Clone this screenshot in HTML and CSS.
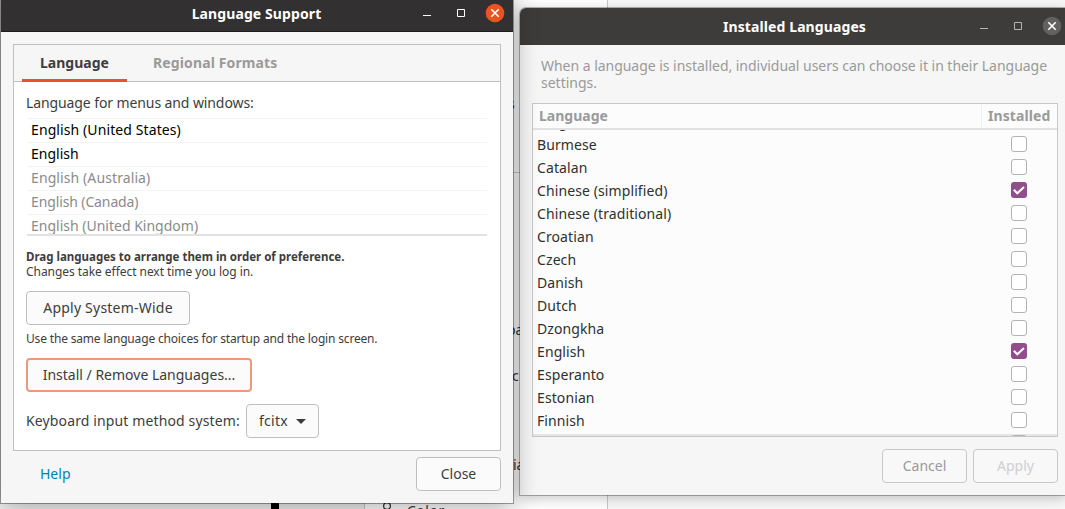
FILE: index.html
```html
<!DOCTYPE html>
<html lang="en">
<head>
<meta charset="utf-8">
<title>Language Support</title>
<link rel="stylesheet" href="styles.css">
</head>
<body>
<main class="desktop">
  <div class="backdrop">
    <div class="back-left"></div>
    <div class="back-black"></div>
    <div class="back-gray"></div>
    <div class="back-panel"></div>
    <div class="back-right"></div>
  </div>
  <div class="back-rule"></div>
  <span class="peek peek-s">s</span>
  <span class="peek peek-pa">pa</span>
  <span class="peek peek-c">c</span>
  <span class="peek peek-ia">ia</span>
  <svg class="peek-icon" viewBox="0 0 10 10"><circle cx="5" cy="4" r="3.4"/><path d="M3 7v3M7 7v3"/></svg>
  <span class="peek peek-color">Color</span>

  <section class="window installed">
    <header class="titlebar">
      <h1 class="t-installed">Installed Languages</h1>
      <div class="controls">
        <svg viewBox="0 0 80 20"><path class="line" d="M6 12.500h8M40.500 6.500h7v7h-7z"/><circle class="disc" cx="78" cy="10" r="9.300"/><path class="cross" d="M74.300 6.300l7.400 7.400M81.700 6.300l-7.400 7.400"/></svg>
      </div>
    </header>
    <div class="installed-body">
      <p class="intro"><span class="intro-first">When a language is installed, individual users can choose it in their Language</span><br><span>settings.</span></p>
      <div class="table">
        <div class="thead"><span class="th-lang">Language</span><span class="th-inst">Installed</span></div>
        <div class="rows">
          <div class="row cut"><span>Bulgarian</span></div>
          <div class="row"><span>Burmese</span><i class="check"></i></div>
          <div class="row"><span>Catalan</span><i class="check"></i></div>
          <div class="row"><span>Chinese (simplified)</span><i class="check on"><svg viewBox="0 0 16 16"><path d="M2.800 7.800l3.500 3.500L13 5"/></svg></i></div>
          <div class="row"><span>Chinese (traditional)</span><i class="check"></i></div>
          <div class="row"><span>Croatian</span><i class="check"></i></div>
          <div class="row"><span>Czech</span><i class="check"></i></div>
          <div class="row"><span>Danish</span><i class="check"></i></div>
          <div class="row"><span>Dutch</span><i class="check"></i></div>
          <div class="row"><span>Dzongkha</span><i class="check"></i></div>
          <div class="row"><span>English</span><i class="check on"><svg viewBox="0 0 16 16"><path d="M2.800 7.800l3.500 3.500L13 5"/></svg></i></div>
          <div class="row"><span>Esperanto</span><i class="check"></i></div>
          <div class="row"><span>Estonian</span><i class="check"></i></div>
          <div class="row"><span>Finnish</span><i class="check"></i></div>
          <div class="row"><span></span><i class="check"></i></div>
        </div>
      </div>
      <div class="actions">
        <button class="btn cancel">Cancel</button>
        <button class="btn apply">Apply</button>
      </div>
    </div>
  </section>

  <section class="window support">
    <header class="titlebar">
      <h1 class="t-support">Language Support</h1>
      <div class="controls">
        <svg viewBox="0 0 80 20"><path class="line" d="M6 12.500h8M40.500 6.500h7v7h-7z"/><circle class="disc" cx="78" cy="10" r="9.300"/><path class="cross" d="M74.300 6.300l7.400 7.400M81.700 6.300l-7.400 7.400"/></svg>
      </div>
    </header>
    <div class="support-body">
      <div class="panel">
        <nav class="tabs"><span class="tab active">Language</span><span class="tab regional">Regional Formats</span></nav>
        <div class="content">
          <p class="menus"><span>Language for menus and windows:</span></p>
          <ul class="langs">
            <li class="own us">English (United States)</li>
            <li class="own">English</li>
            <li class="au">English (Australia)</li>
            <li class="ca">English (Canada)</li>
            <li>English (United Kingdom)</li>
          </ul>
          <p class="small drag">Drag languages to arrange them in order of preference.</p>
          <p class="small changes">Changes take effect next time you log in.</p>
          <button class="btn wide">Apply System-Wide</button>
          <p class="small same">Use the same language choices for startup and the login screen.</p>
          <button class="btn focus">Install / Remove Languages...</button>
          <div class="method"><span>Keyboard input method system:</span>
            <button class="btn combo">fcitx<svg viewBox="0 0 10 5"><path d="M0 0h10L5 5z"/></svg></button>
          </div>
        </div>
      </div>
      <footer class="footer"><a class="help">Help</a><button class="btn close">Close</button></footer>
    </div>
  </section>
</main>
</body>
</html>
```
FILE: styles.css
```css
* { box-sizing: border-box; }
body { margin: 0; font: 14px/20px "Noto Sans", "Open Sans", sans-serif; color: #3d3d3d; }
h1, p, ul { margin: 0; padding: 0; }
p, li, span, button, a, h1 { white-space: nowrap; }
.desktop { position: relative; width: 1065px; height: 509px; overflow: hidden; background: #999; }
.backdrop { display: flex; height: 509px; }
.back-left { width: 271px; background: #f4f4f4; }
.back-black { width: 8px; background: #000; }
.back-gray { width: 85px; background: #f0f0f0; }
.back-panel { width: 244px; background: #fff; border: solid #c8c8c8; border-width: 0 1px; }
.back-right { flex: 1; background: #f8f8f8; }
.back-rule { position: absolute; left: 500px; top: 172px; width: 30px; height: 1px; background: #ccc; }
.peek { position: absolute; color: #333; }
.peek-s { left: 508px; top: 94px; }
.peek-pa { left: 507px; top: 320px; }
.peek-c { left: 512px; top: 366px; }
.peek-ia { left: 513px; top: 455px; }
.peek-color { left: 407px; top: 501px; letter-spacing: .5px; }
.peek-icon { position: absolute; left: 382px; top: 502px; width: 10px; height: 10px; fill: none; stroke: #333; stroke-width: 1.2; }

.window { position: absolute; display: flex; flex-direction: column; background: #f6f6f6; }
.installed { left: 520px; top: 8px; width: 546px; height: 487px; border-radius: 6px 0 0 0; box-shadow: 0 0 0 1px rgba(0,0,0,.28), 0 3px 14px rgba(0,0,0,.24); }
.support { left: 1px; top: -6px; width: 512px; height: 509px; box-shadow: 0 0 0 1px rgba(0,0,0,.35), 0 3px 24px rgba(0,0,0,.36); }
.titlebar { position: relative; display: flex; justify-content: center; align-items: center; flex: none; height: 37px; color: #fff; background: #3e3c3a; }
.installed .titlebar { border-radius: 6px 0 0 0; }
.support .titlebar { height: 38px; background: #323030; border-bottom: 1px solid #1e1c1c; padding-top: 2px; }
h1 { font-size: 14px; line-height: 20px; font-weight: 700; letter-spacing: .1px; }
.t-installed { padding-left: 3px; }
.t-support { padding-right: 1px; }
.controls { position: absolute; top: 8px; width: 80px; height: 20px; }
.installed .controls { right: 12px; }
.support .controls { right: 16px; top: 9px; }
.controls svg { display: block; width: 80px; height: 20px; overflow: visible; }
.line { fill: none; stroke: #b5b4b2; }
.cross { fill: none; stroke: #fff; stroke-width: 1.6; }
.disc { fill: #626160; }
.support .line { stroke: #fff; }
.support .disc { fill: #e95420; }

.support-body { display: flex; flex-direction: column; padding: 12px; }
.panel { width: 488px; height: 407px; border: 1px solid #c0c0c0; background: #fff; }
.tabs { display: flex; height: 37px; background: #f6f6f6; border-bottom: 1px solid #c0c0c0; padding-left: 8px; font-weight: 700; color: #9a9a9a; }
.tab { height: 37px; line-height: 36px; }
.tab.active { width: 105px; padding-left: 18px; color: #3d3d3d; border-bottom: 3px solid #e95420; }
.regional { margin-left: 26px; letter-spacing: .12px; }
.content { display: flex; flex-direction: column; align-items: flex-start; padding: 11px 12px 0; }
.menus { height: 25px; letter-spacing: -.1px; }
.langs { width: 460px; height: 118px; margin-left: 1px; overflow: hidden; list-style: none; border-bottom: 2px solid #e2e2e2; color: #8b8b8b; }
.langs li { height: 24px; line-height: 21px; padding-left: 4px; border-top: 1px solid #f4f4f4; }
.langs .own { color: #000; }
.langs .us { letter-spacing: .1px; }
.langs .au { letter-spacing: .1px; }
.langs .ca { letter-spacing: -.12px; }
.small { font-size: 11.500px; line-height: 15px; }
.drag { margin-top: 13px; font-weight: 700; }
.changes { font-size: 12px; letter-spacing: -.05px; }
.btn { display: flex; align-items: center; justify-content: center; height: 34px; padding: 0; font: inherit; color: inherit; background: #fbfbfb; border: 1px solid #bfbfbf; border-radius: 4px; }
.wide { width: 164px; margin-top: 12px; letter-spacing: .22px; }
.same { margin-top: 6px; font-size: 12px; letter-spacing: -.17px; }
.focus { width: 226px; margin-top: 12px; border: 2px solid #ec9a7c; }
.method { display: flex; align-items: center; margin-top: 12px; }
.method > span { width: 220px; letter-spacing: .13px; }
.combo { width: 73px; gap: 8px; letter-spacing: .3px; }
.combo svg { width: 10px; height: 5px; fill: #3d3d3d; }
.footer { display: flex; align-items: center; justify-content: space-between; margin-top: 6px; padding-left: 27px; width: 488px; }
.help { color: #0083b3; }
.close { width: 85px; }

.installed-body { padding: 12px 8px 0 12px; }
.intro { height: 46px; padding-left: 9px; line-height: 17px; color: #9a9a9a; }
.intro-first { letter-spacing: -.03px; }
.table { display: flex; flex-direction: column; width: 526px; height: 334px; border: 1px solid #c8c8c8; background: #fcfcfc; }
.thead { display: flex; height: 26px; flex: none; border-bottom: 2px solid #e2e2e2; font-weight: 700; color: #9a9a9a; line-height: 24px; }
.th-lang { width: 448px; padding-left: 6px; }
.th-inst { width: 76px; padding-left: 6px; height: 24px; border-left: 1px solid #efefef; letter-spacing: .1px; }
.rows { flex: 1; overflow: hidden; color: #303030; letter-spacing: .1px; box-shadow: inset 0 -2px #e6e6e6; }
.row { display: flex; justify-content: space-between; align-items: center; height: 23px; padding: 0 30px 0 4px; }
.row.cut { margin-top: -19px; height: 22px; }
.check { width: 16px; height: 16px; margin-top: -1px; border: 1px solid #b3b3b3; border-radius: 3px; background: #fff; }
.check.on { border: 0; background: #924d8b; }
.check svg { display: block; fill: none; stroke: #fff; stroke-width: 2; }
.actions { display: flex; justify-content: flex-end; gap: 6px; margin-top: 12px; }
.cancel, .apply { width: 85px; color: #9a9a9a; border-color: #c8c8c8; background: #f8f8f8; }
.apply { color: #cfcfcf; }
```
